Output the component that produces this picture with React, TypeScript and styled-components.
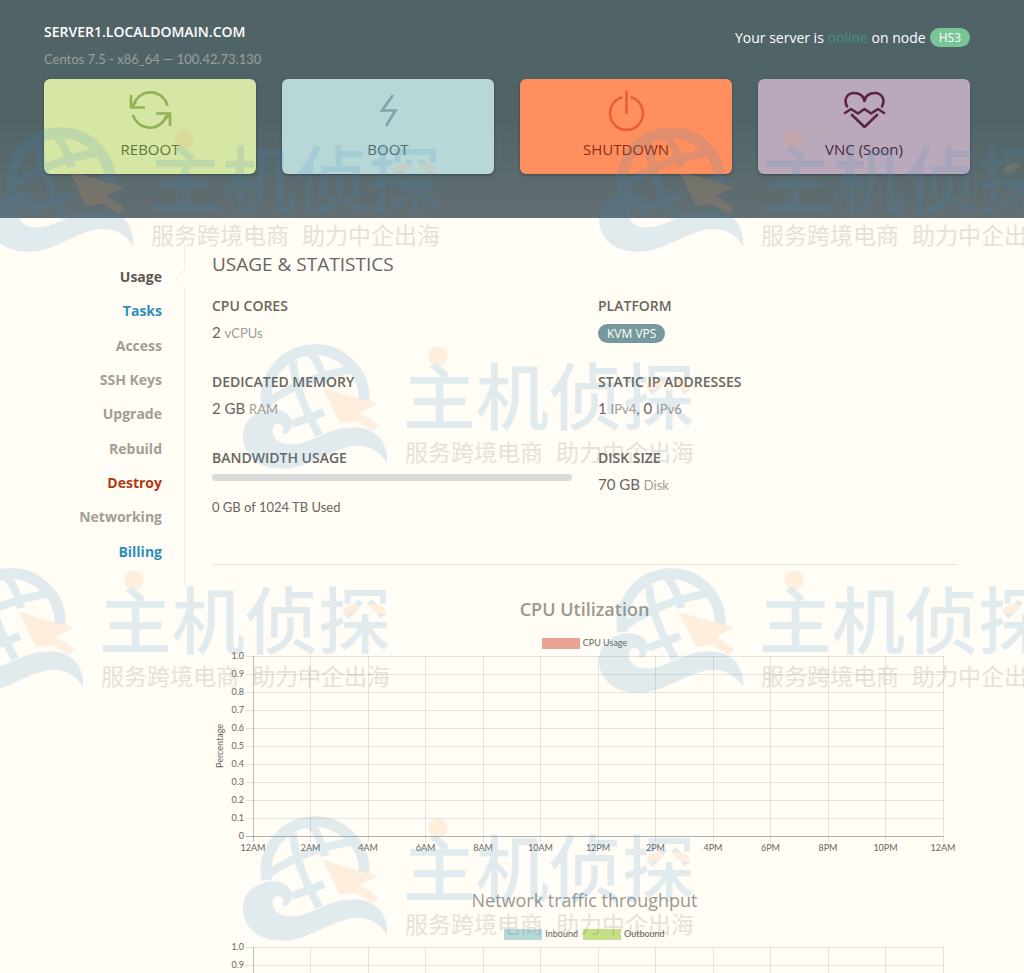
import React from "react";
import styled, { createGlobalStyle } from "styled-components";

const GlobalStyle = createGlobalStyle`
  * { box-sizing: border-box; }
  body {
    margin: 0;
    background: #fffdf5;
    color: #69655f;
    font-family: "Open Sans", "Noto Sans", sans-serif;
    font-size: 14px;
  }
  h1, h2, h3, p, ul, dl, dd { margin: 0; padding: 0; }
`;

const Page = styled.div`
  position: relative;
  min-height: 100vh;
  overflow: hidden;
`;

const Header = styled.header`
  padding: 22px 54px 44px 44px;
  background: linear-gradient(#506468, #506468 55%, #626f72);
`;

const HeaderTop = styled.div`
  display: flex;
  justify-content: space-between;
  align-items: flex-start;
  margin-bottom: 11px;
`;

const HostName = styled.h1`
  font-size: 14px;
  font-weight: 600;
  line-height: 20px;
  color: #fff;
`;

const HostInfo = styled.p`
  margin-top: 8px;
  font-family: Lato, sans-serif;
  font-size: 13px;
  line-height: 18px;
  color: #97a09d;
`;

const Status = styled.p`
  display: flex;
  align-items: center;
  gap: 4px;
  margin-top: 6px;
  font-weight: 500;
  line-height: 19px;
  color: #fff;
`;

const Online = styled.span`
  color: #3f9581;
`;

const Badge = styled.span<{ $color: string }>`
  display: inline-block;
  padding: 0 9px;
  border-radius: 10px;
  background: ${(p) => p.$color};
  color: #fff;
  font: 500 12px/19px "Open Sans", sans-serif;
`;

const Actions = styled.div`
  display: grid;
  grid-template-columns: repeat(4, 1fr);
  gap: 26px;
`;

const ActionButton = styled.button<{ $bg: string; $fg: string; $icon: string }>`
  display: flex;
  flex-direction: column;
  align-items: center;
  height: 95px;
  padding: 9px 0 0;
  border: 0;
  border-radius: 6px;
  background: ${(p) => p.$bg};
  box-shadow: 0 1px 3px rgba(0, 0, 0, 0.35);
  color: ${(p) => p.$fg};
  font: 400 15px/20px "Open Sans", sans-serif;
  cursor: pointer;

  svg {
    width: 48px;
    height: 44px;
    margin-bottom: 7px;
    color: ${(p) => p.$icon};
  }
`;

const Body = styled.div`
  display: flex;
  align-items: flex-start;
  padding: 26px 67px 0 0;
`;

const SideNav = styled.nav`
  position: relative;
  flex: 0 0 185px;
  padding: 16px 22px 16px 0;
  margin-right: 27px;
  border-right: 1px solid #efede6;

  &::after {
    content: "";
    position: absolute;
    top: 28px;
    right: -7px;
    width: 12px;
    height: 12px;
    border: 1px solid #f3f1ea;
    border-width: 0 0 1px 1px;
    background: #fffdf5;
    transform: rotate(45deg);
  }
`;

const NavList = styled.ul`
  display: grid;
  grid-auto-rows: 1fr;
  height: 309px;
  list-style: none;
  text-align: right;
`;

const NavLink = styled.a<{ $color: string }>`
  font-weight: 700;
  line-height: 34px;
  color: ${(p) => p.$color};
  text-decoration: none;
`;

const Main = styled.main`
  flex: 1;
  min-width: 0;
`;

const SectionTitle = styled.h2`
  margin: 7px 0 19px;
  font-size: 19px;
  font-weight: 400;
  line-height: 26px;
`;

const Stats = styled.dl`
  display: grid;
  grid-template-columns: 360px 1fr;
  column-gap: 26px;
  grid-auto-rows: 76px;
  padding-bottom: 40px;
  border-bottom: 1px solid #e6e4dd;
`;

const StatLabel = styled.dt`
  font-weight: 600;
  line-height: 20px;
`;

const StatValue = styled.dd`
  margin-top: 6px;
  font-family: Lato, sans-serif;
  font-size: 15px;
  line-height: 20px;

  small {
    font-size: 13px;
    color: #a09c96;
  }
`;

const Meter = styled.div`
  height: 7px;
  margin-top: 6px;
  border-radius: 4px;
  background: #dadada;
`;

const MeterText = styled.p`
  margin-top: 16px;
  font-family: Lato, sans-serif;
  font-size: 13px;
  line-height: 20px;
  white-space: nowrap;
`;

const ChartBox = styled.section`
  padding-top: 24px;
`;

const ChartTitle = styled.h3<{ $weight: number }>`
  padding: 6px 0;
  font-size: 18px;
  font-weight: ${(p) => p.$weight};
  line-height: 28px;
  color: #9c9892;
  text-align: center;
`;

const Legend = styled.div`
  display: flex;
  justify-content: center;
  gap: 5px;
  margin-top: 7px;
  font-family: Lato, sans-serif;
  font-size: 9px;
  line-height: 14px;
`;

const LegendItem = styled.span<{ $color: string }>`
  display: flex;
  align-items: center;
  gap: 3px;

  &::before {
    content: "";
    width: 38px;
    height: 11px;
    background: ${(p) => p.$color};
  }
`;

const Plot = styled.svg`
  display: block;
  width: 100%;
  height: auto;
  overflow: visible;
  font-family: Lato, sans-serif;
  font-size: 9px;
`;

const WatermarkLayer = styled.div`
  position: absolute;
  inset: 0;
  overflow: hidden;
  pointer-events: none;
`;

const Watermark = styled.svg<{ $x: number; $y: number }>`
  position: absolute;
  left: ${(p) => p.$x}px;
  top: ${(p) => p.$y}px;
  width: 456px;
  height: 128px;
  opacity: 0.15;
`;

const nav = [
  ["Usage", "#5d5852"],
  ["Tasks", "#2f8fba"],
  ["Access", "#a29e97"],
  ["SSH Keys", "#a29e97"],
  ["Upgrade", "#a29e97"],
  ["Rebuild", "#a29e97"],
  ["Destroy", "#b03a12"],
  ["Networking", "#a29e97"],
  ["Billing", "#2f8fba"],
];

const hours = ["12AM", "2AM", "4AM", "6AM", "8AM", "10AM", "12PM", "2PM", "4PM", "6PM", "8PM", "10PM", "12AM"];
const ticks = ["1.0", "0.9", "0.8", "0.7", "0.6", "0.5", "0.4", "0.3", "0.2", "0.1", "0"];

const logos = [
  [-12, 125],
  [598, 125],
  [242, 342],
  [-62, 566],
  [598, 566],
  [242, 814],
];

function RebootIcon() {
  return (
    <svg viewBox="0 0 48 44" fill="none" stroke="currentColor" strokeWidth="2.6" aria-hidden="true">
      <path d="M7.5 17.5A17.500 17.500 0 0 1 41.500 18M40.500 27.500A17.500 17.500 0 0 1 7 27" />
      <path d="M5 7v12.500h14M5 19l5-5" />
      <path d="M44 38V25.500h-14M44 26l-5 5" />
    </svg>
  );
}

function BootIcon() {
  return (
    <svg viewBox="0 0 48 44" fill="none" stroke="currentColor" strokeWidth="2.6" aria-hidden="true">
      <path d="M29 7L18 22.500h13.500L22 38" />
    </svg>
  );
}

function PowerIcon() {
  return (
    <svg viewBox="0 0 48 44" fill="none" stroke="currentColor" strokeWidth="2.600" aria-hidden="true">
      <path d="M24.500 2.500V26M20.500 9.300A16.500 16.500 0 1 0 28.500 9.300" />
    </svg>
  );
}

function HeartIcon() {
  return (
    <svg
      viewBox="0 0 48 44"
      fill="none"
      stroke="currentColor"
      strokeWidth="2.600"
      strokeLinecap="round"
      strokeLinejoin="round"
      aria-hidden="true"
    >
      <path d="M7 18.500C3 11 8 5 14 5C19.500 5 24 8 24.500 13C25 8 29.500 5 35 5C41 5 46 11 42 18.500" />
      <path d="M5 25L11 21L18 25.500L24.500 21L31 25.500L38 21L44 25" />
      <path d="M12 27L24.500 39L37 27" />
    </svg>
  );
}

const actions = [
  { label: "REBOOT", bg: "#d6e6a4", fg: "#5f7836", icon: "#94b153", Icon: RebootIcon },
  { label: "BOOT", bg: "#b8d8d8", fg: "#4d6e70", icon: "#7ea5a7", Icon: BootIcon },
  { label: "SHUTDOWN", bg: "#ff8f5e", fg: "#8a2f14", icon: "#e8602f", Icon: PowerIcon },
  { label: "VNC (Soon)", bg: "#baa9bb", fg: "#4b2740", icon: "#5c2442", Icon: HeartIcon },
];

function Chart({
  title,
  weight,
  series,
  axis,
}: {
  title: string;
  weight: number;
  series: [string, string][];
  axis?: string;
}) {
  return (
    <ChartBox>
      <ChartTitle $weight={weight}>{title}</ChartTitle>
      <Legend>
        {series.map(([name, color]) => (
          <LegendItem key={name} $color={color}>
            {name}
          </LegendItem>
        ))}
      </Legend>
      <Plot viewBox="0 0 745 206" role="img" aria-label={title}>
        <g stroke="#000" strokeOpacity="0.1">
          {ticks.map((t, i) => (
            <path key={t} d={`M34 ${6.5 + i * 18}H731.500`} strokeOpacity={i === 10 ? 0.3 : undefined} />
          ))}
          {hours.map((_, i) => (
            <path
              key={i}
              d={`M${Math.floor(41 + i * 57.5) + 0.5} 6V192`}
              strokeOpacity={i === 0 ? 0.25 : undefined}
            />
          ))}
        </g>
        <g fill="#69655f">
          {ticks.map((t, i) => (
            <text key={t} x="32" y={9 + i * 18} textAnchor="end">
              {t}
            </text>
          ))}
          {hours.map((h, i) => (
            <text key={i} x={41 + i * 57.5} y="201" textAnchor="middle">
              {h}
            </text>
          ))}
          {axis && (
            <text transform="rotate(-90)" x="-96" y="11" textAnchor="middle">
              {axis}
            </text>
          )}
        </g>
      </Plot>
    </ChartBox>
  );
}

function Logo({ x, y }: { x: number; y: number }) {
  return (
    <Watermark $x={x} $y={y} viewBox="0 0 456 128">
      <g fill="none" stroke="#3e8cc8">
        <path d="M25 66A49 49 0 1 1 122 60" strokeWidth="11" />
        <path d="M51 19C52 45 66 72 77 93M28 59Q64 34 114 27M67 9Q80 24 83 42M50 82L82 70" strokeWidth="8" />
      </g>
      <path
        fill="#3e8cc8"
        d="M19 70C28 64 45 67 49 77C52 85 47 94 40 91C44 86 40 81 35 82C29 84 29 94 36 99C50 108 68 98 84 91C103 83 126 82 138 96C143 102 146 112 145 121C138 109 127 103 112 104C92 106 72 122 49 126C22 130 1 117 1 94C1 82 9 73 19 70Z"
      />
      <path fill="#fa9f5c" d="M81 46L136 62L118 71L136 83L131 89L114 79L98 81Z" />
      <circle cx="196" cy="14" r="9.500" fill="#fa9f5c" />
      <text
        x="161"
        y="82"
        fill="#3e8cc8"
        fontFamily="'Noto Sans CJK SC', sans-serif"
        fontWeight="500"
        fontSize="73"
      >
        主机侦探
      </text>
      <g fill="#fa9f5c">
        <ellipse cx="413" cy="43" rx="9" ry="4" transform="rotate(-20 413 43)" />
        <ellipse cx="440" cy="43" rx="9" ry="4" transform="rotate(25 440 43)" />
      </g>
      <g fill="#504646" fontFamily="'Noto Sans CJK SC', sans-serif" fontSize="23">
        <text x="163" y="119">服务跨境电商</text>
        <text x="314" y="119">助力中企出海</text>
      </g>
    </Watermark>
  );
}

export default function App() {
  return (
    <Page>
      <GlobalStyle />
      <Header>
        <HeaderTop>
          <div>
            <HostName>SERVER1.LOCALDOMAIN.COM</HostName>
            <HostInfo>Centos 7.5 - x86_64 — 100.42.73.130</HostInfo>
          </div>
          <Status>
            <span>
              Your server is <Online>online</Online> on node
            </span>
            <Badge $color="#78c598">HS3</Badge>
          </Status>
        </HeaderTop>
        <Actions>
          {actions.map(({ label, bg, fg, icon, Icon }) => (
            <ActionButton key={label} type="button" $bg={bg} $fg={fg} $icon={icon}>
              <Icon />
              {label}
            </ActionButton>
          ))}
        </Actions>
      </Header>

      <Body>
        <SideNav>
          <NavList>
            {nav.map(([label, color]) => (
              <li key={label}>
                <NavLink href={`#${label}`} $color={color}>
                  {label}
                </NavLink>
              </li>
            ))}
          </NavList>
        </SideNav>

        <Main>
          <SectionTitle>USAGE &amp; STATISTICS</SectionTitle>
          <Stats>
            <div>
              <StatLabel>CPU CORES</StatLabel>
              <StatValue>
                2 <small>vCPUs</small>
              </StatValue>
            </div>
            <div>
              <StatLabel>PLATFORM</StatLabel>
              <StatValue>
                <Badge $color="#76999b">KVM VPS</Badge>
              </StatValue>
            </div>
            <div>
              <StatLabel>DEDICATED MEMORY</StatLabel>
              <StatValue>
                2 GB <small>RAM</small>
              </StatValue>
            </div>
            <div>
              <StatLabel>STATIC IP ADDRESSES</StatLabel>
              <StatValue>
                1 <small>IPv4</small>, 0 <small>IPv6</small>
              </StatValue>
            </div>
            <div>
              <StatLabel>BANDWIDTH USAGE</StatLabel>
              <dd>
                <Meter role="progressbar" aria-label="Bandwidth usage" aria-valuenow={0} />
                <MeterText>0 GB of 1024 TB Used</MeterText>
              </dd>
            </div>
            <div>
              <StatLabel>DISK SIZE</StatLabel>
              <StatValue>
                70 GB <small>Disk</small>
              </StatValue>
            </div>
          </Stats>

          <Chart title="CPU Utilization" weight={600} series={[["CPU Usage", "#e8a595"]]} axis="Percentage" />
          <Chart
            title="Network traffic throughput"
            weight={400}
            series={[
              ["Inbound", "#b5d9d8"],
              ["Outbound", "#c5de88"],
            ]}
          />
        </Main>
      </Body>

      <WatermarkLayer aria-hidden="true">
        {logos.map(([x, y]) => (
          <Logo key={`${x}-${y}`} x={x} y={y} />
        ))}
      </WatermarkLayer>
    </Page>
  );
}
